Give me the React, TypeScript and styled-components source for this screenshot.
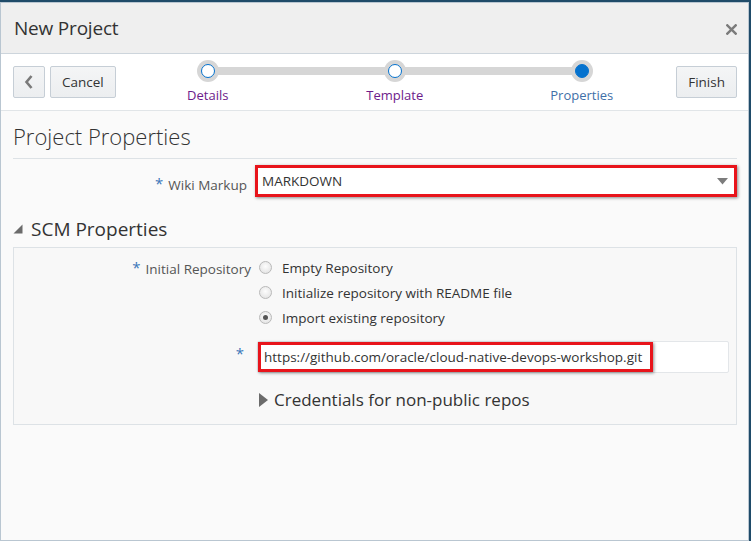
import React from "react";
import styled, { createGlobalStyle } from "styled-components";

const GlobalStyle = createGlobalStyle`
  html, body {
    margin: 0;
    padding: 0;
    background: #1f4b69;
  }
  body {
    font-family: "Open Sans", "Noto Sans", "Liberation Sans", sans-serif;
    color: #333;
  }
  * { box-sizing: border-box; }
`;

const Dialog = styled.div`
  margin-top: 2px;
  width: 749px;
  height: 539px;
  background: #fafafa;
  border: 1px solid #b9c6d1;
  display: flex;
  flex-direction: column;
`;

const Header = styled.div`
  height: 51px;
  flex: none;
  background: #efefef;
  border-bottom: 1px solid #cdd5dc;
  display: flex;
  align-items: center;
  justify-content: space-between;
  padding: 0 11px 0 13px;
`;

const Title = styled.h1`
  margin: 0;
  font-size: 19px;
  font-weight: 400;
  color: #333;
  letter-spacing: -0.2px;
`;

const CloseBtn = styled.span`
  display: flex;
  width: 11px;
  height: 11px;
  margin-top: 3px;
`;

const TrainBar = styled.div`
  height: 57px;
  flex: none;
  background: #fff;
  border-bottom: 1px solid #e1e5e8;
  display: flex;
  align-items: flex-start;
  padding: 12px 11px 0 12px;
`;

const Button = styled.button<{ $square?: boolean }>`
  height: 32px;
  width: ${(p) => (p.$square ? "32px" : "auto")};
  padding: ${(p) => (p.$square ? "0" : "0 11px")};
  background: linear-gradient(#f4f5f6, #eceef0);
  border: 1px solid #c6ced6;
  border-radius: 2px;
  font-family: inherit;
  font-size: 13.5px;
  color: #333;
  display: flex;
  align-items: center;
  justify-content: center;
  margin-right: 5px;
  &:last-child {
    margin-right: 0;
  }
`;

const Steps = styled.div`
  position: relative;
  display: grid;
  grid-template-columns: repeat(3, 120px);
  column-gap: 67px;
  margin-left: 27px;
  margin-top: -6px;
  &::before {
    content: "";
    position: absolute;
    left: 60px;
    right: 60px;
    top: 7px;
    height: 8px;
    background: #d6d6d6;
  }
`;

const Step = styled.div`
  position: relative;
  display: flex;
  flex-direction: column;
  align-items: center;
`;

const Dot = styled.div<{ $active?: boolean }>`
  width: 22px;
  height: 22px;
  border-radius: 50%;
  background: #d6d6d6;
  display: flex;
  align-items: center;
  justify-content: center;
  &::after {
    content: "";
    width: 14px;
    height: 14px;
    border-radius: 50%;
    box-sizing: border-box;
    border: 1.5px solid #0572ce;
    background: ${(p) => (p.$active ? "#0572ce" : "#fff")};
  }
`;

const StepLabel = styled.span<{ $visited?: boolean }>`
  margin-top: 4px;
  font-size: 13px;
  color: ${(p) => (p.$visited ? "#6d1b8a" : "#3f6fa8")};
`;

const Spacer = styled.div`
  flex: 1;
`;

const Content = styled.div`
  padding: 0 11px 0 12px;
  display: flex;
  flex-direction: column;
`;

const PageHeading = styled.h2`
  margin: 0;
  height: 48px;
  display: flex;
  align-items: center;
  font-size: 22px;
  font-weight: 300;
  color: #333;
  border-bottom: 1px solid #dde2e6;
  padding-top: 3px;
`;

const FormRow = styled.div<{ $labelWidth: number; $top?: number }>`
  display: grid;
  grid-template-columns: ${(p) => p.$labelWidth}px 1fr;
  column-gap: 8px;
  align-items: start;
  margin-top: ${(p) => p.$top ?? 0}px;
`;

const Label = styled.div<{ $pad?: number }>`
  text-align: right;
  font-size: 13.5px;
  color: #555;
  padding-top: ${(p) => p.$pad ?? 0}px;
  white-space: nowrap;
`;

const Req = styled.span`
  color: #3a76b9;
  font-size: 15px;
  margin-right: 5px;
  vertical-align: 1px;
`;

const Highlight = styled.div`
  border: 3px solid #e8141b;
  box-shadow: 1px 1px 3px rgba(0, 0, 0, 0.45);
`;

const SelectBox = styled.div`
  height: 26px;
  background: #fff;
  display: flex;
  align-items: center;
  justify-content: space-between;
  padding: 0 6px 0 4px;
  font-size: 13.5px;
  color: #333;
`;

const SectionHeading = styled.h3`
  margin: 18px 0 0 0;
  display: flex;
  align-items: center;
  font-size: 19px;
  font-weight: 400;
  color: #333;
  height: 28px;
  gap: 8px;
`;

const Panel = styled.div`
  margin-top: 4px;
  border: 1px solid #dde2e6;
  background: #f8f8f8;
  padding: 9px 0 13px 0;
  display: flex;
  flex-direction: column;
`;

const RadioList = styled.div`
  display: flex;
  flex-direction: column;
  gap: 6px;
  padding-top: 1px;
`;

const RadioItem = styled.label`
  display: flex;
  align-items: center;
  gap: 10px;
  font-size: 13.5px;
  color: #333;
  height: 19px;
`;

const Radio = styled.span<{ $checked?: boolean }>`
  width: 13px;
  height: 13px;
  border-radius: 50%;
  border: 1px solid #b9b9b9;
  background: radial-gradient(circle at 50% 40%, #fdfdfd, #dedede);
  display: flex;
  align-items: center;
  justify-content: center;
  &::after {
    content: "";
    width: 5px;
    height: 5px;
    border-radius: 50%;
    background: ${(p) => (p.$checked ? "#555" : "transparent")};
  }
`;

const InputField = styled.div`
  height: 32px;
  background: #fff;
  border: 1px solid #e3e6e9;
  border-radius: 2px;
  margin-right: 7px;
  display: flex;
  align-items: stretch;
`;

const UrlText = styled.div`
  display: flex;
  align-items: center;
  height: 100%;
  padding: 0 8px 0 3px;
  font-size: 13.5px;
  color: #333;
  background: #fff;
`;

const Disclosure = styled.div`
  display: flex;
  align-items: center;
  gap: 6px;
  font-size: 17px;
  color: #333;
  margin-top: 15px;
  margin-left: 2px;
`;

export default function App() {
  return (
    <>
      <GlobalStyle />
      <Dialog>
        <Header>
          <Title>New Project</Title>
          <CloseBtn>
            <svg width="11" height="11" viewBox="0 0 11 11">
              <path d="M1.3 1.3 L9.7 9.7 M9.7 1.3 L1.3 9.7" stroke="#7b7b7b" strokeWidth="2.4" strokeLinecap="square" />
            </svg>
          </CloseBtn>
        </Header>
        <TrainBar>
          <Button $square aria-label="Back">
            <svg width="10" height="16" viewBox="0 0 10 16">
              <path d="M7.5 2 L2.5 8 L7.5 14" fill="none" stroke="#7a7a7a" strokeWidth="2.6" />
            </svg>
          </Button>
          <Button>Cancel</Button>
          <Steps>
            <Step>
              <Dot />
              <StepLabel $visited>Details</StepLabel>
            </Step>
            <Step>
              <Dot />
              <StepLabel $visited>Template</StepLabel>
            </Step>
            <Step>
              <Dot $active />
              <StepLabel>Properties</StepLabel>
            </Step>
          </Steps>
          <Spacer />
          <Button>Finish</Button>
        </TrainBar>
        <Content>
          <PageHeading>Project Properties</PageHeading>
          <FormRow $labelWidth={234} $top={6}>
            <Label $pad={8}>
              <Req>*</Req>Wiki Markup
            </Label>
            <Highlight>
              <SelectBox>
                <span>MARKDOWN</span>
                <svg width="11" height="7" viewBox="0 0 11 7">
                  <polygon points="0,0 11,0 5.5,6.5" fill="#7c7c7c" />
                </svg>
              </SelectBox>
            </Highlight>
          </FormRow>
          <SectionHeading>
            <svg width="10" height="10" viewBox="0 0 10 10">
              <polygon points="9.5,0.5 9.5,9.5 0.5,9.5" fill="#6b6b6b" />
            </svg>
            SCM Properties
          </SectionHeading>
          <Panel>
            <FormRow $labelWidth={237}>
              <Label>
                <Req>*</Req>Initial Repository
              </Label>
              <RadioList>
                <RadioItem>
                  <Radio />
                  Empty Repository
                </RadioItem>
                <RadioItem>
                  <Radio />
                  Initialize repository with README file
                </RadioItem>
                <RadioItem>
                  <Radio $checked />
                  Import existing repository
                </RadioItem>
              </RadioList>
            </FormRow>
            <FormRow $labelWidth={235} $top={14}>
              <Label $pad={2}>
                <Req>*</Req>
              </Label>
              <InputField>
                <Highlight>
                  <UrlText>https://github.com/oracle/cloud-native-devops-workshop.git</UrlText>
                </Highlight>
              </InputField>
            </FormRow>
            <FormRow $labelWidth={235}>
              <div />
              <Disclosure>
                <svg width="9" height="14" viewBox="0 0 9 14">
                  <polygon points="0,0 9,7 0,14" fill="#6b6b6b" />
                </svg>
                Credentials for non-public repos
              </Disclosure>
            </FormRow>
          </Panel>
        </Content>
      </Dialog>
    </>
  );
}
